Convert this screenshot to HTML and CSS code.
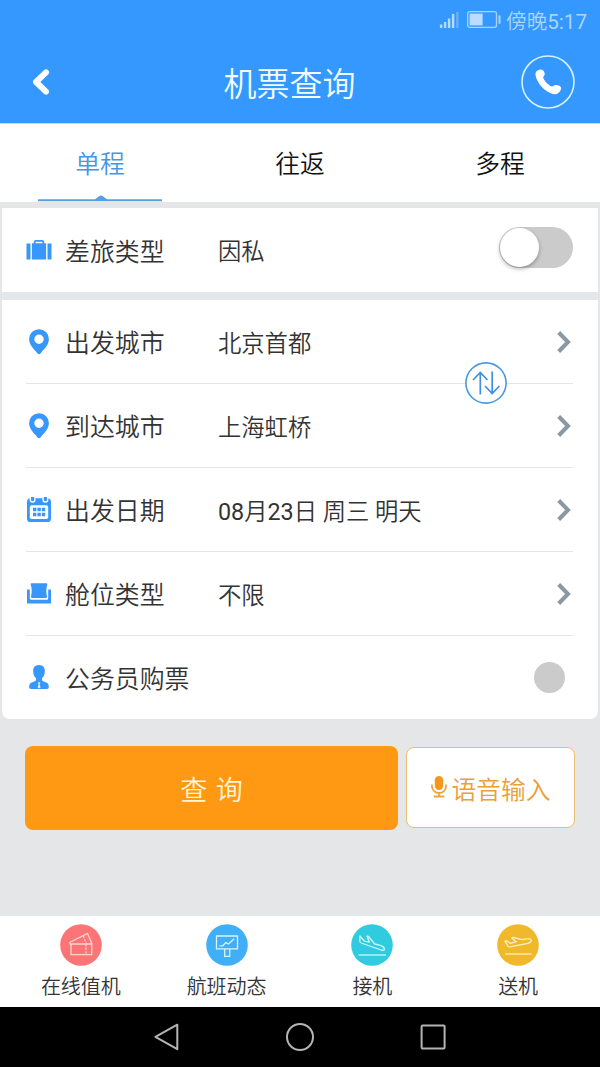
FILE: index.html
```html
<!DOCTYPE html>
<html lang="zh-CN">
<head>
<meta charset="utf-8">
<title>机票查询</title>
<link rel="stylesheet" href="styles.css">
</head>
<body>
<div class="screen">
  <header class="header">
    <div class="status">
      <svg class="signal" width="20" height="18" viewBox="0 0 20 18"><path d="M2.1 13.5v3.5M6.1 11v6M10.1 7.5v9.5M14.1 3v14" stroke="#b5dcff" stroke-width="2.4"/><path d="M18.3 1v16" stroke="#66b0fb" stroke-width="2.4"/></svg>
      <svg class="battery" width="34" height="17" viewBox="0 0 34 17"><rect x=".7" y=".7" width="28.8" height="15.6" rx="2" fill="none" stroke="#a9d4ff" stroke-width="1.3"/><rect x="2.6" y="2.6" width="13" height="11.8" fill="#b9dcff"/><rect x="31.5" y="4.2" width="2" height="8.6" rx=".6" fill="#a9d4ff"/></svg>
      <span class="clock">傍晚<span class="digits">5:17</span></span>
    </div>
    <div class="titlebar">
      <svg class="back" width="20" height="28" viewBox="0 0 20 28"><path d="M16 4.4 6 14l10 9.6" fill="none" stroke="#fff" stroke-width="6" stroke-linecap="round" stroke-linejoin="round"/></svg>
      <h1 class="title">机票查询</h1>
      <svg class="phone" width="54" height="54" viewBox="0 0 54 54"><circle cx="27" cy="27" r="26" fill="none" stroke="#d6f4ff" stroke-width="1.6"/><path d="M16.6 15.6C20.2 13.1 22.8 14.8 23.7 18.3C24.1 20.6 22.3 21.1 22.2 22.7C22.9 25.4 27.5 30.3 30.8 31.5C32.6 31.6 33 29.9 35.2 30.1C38.4 30.4 41 32 39.9 34.4C38.9 37 36.5 39.6 33 39.2C24.7 37.6 15.8 28.5 14.5 20C14.3 18 15 16.6 16.6 15.6Z" fill="#fff"/></svg>
    </div>
  </header>

  <nav class="tabs">
    <div class="tab tab-active">单程<svg class="tab-line" width="124" height="7" viewBox="0 0 124 7"><path d="M0 4.2H57L61.5 1Q63 0 64.5 1L69 4.2H124V6.2H0Z" fill="#5a9ee2"/></svg></div>
    <div class="tab">往返</div>
    <div class="tab">多程</div>
  </nav>

  <main class="content">
    <section class="card card-type">
      <div class="row">
        <svg class="icon" width="26" height="26" viewBox="0 0 26 26"><path d="M.5 6.4h4v16.2h-4zM21.5 6.4h4v16.2h-4z" fill="#3797fb"/><path d="M5.9 6.2h1.9V4.8Q7.8 2.9 9.7 2.9h6.6Q18.2 2.9 18.2 4.8V6.2h1.9v16.4H5.9zM9.6 4.8V6.2h6.8V4.8z" fill="#3797fb" fill-rule="evenodd"/></svg>
        <span class="label">差旅类型</span>
        <span class="value">因私</span>
        <span class="toggle"><span class="knob"></span></span>
      </div>
    </section>

    <section class="card card-form">
      <div class="row">
        <svg class="icon" width="26" height="26" viewBox="0 0 26 26"><path d="M13 .2A9.9 9.9 0 0 0 3.1 10.1C3.1 16.4 8.8 21.1 11.5 24.5Q13 26 14.5 24.5C17.2 21.1 22.9 16.4 22.9 10.1A9.9 9.9 0 0 0 13 .2ZM13 5.5a4.7 4.7 0 1 1 0 9.4a4.7 4.7 0 0 1 0-9.4Z" fill="#3797fb" fill-rule="evenodd"/></svg>
        <span class="label">出发城市</span>
        <span class="value">北京首都</span>
        <svg class="chevron" width="16" height="24" viewBox="0 0 16 24"><path d="M2.7 2.5 12 12l-9.3 9.5" fill="none" stroke="#8998a3" stroke-width="4"/></svg>
        <svg class="swap" width="42" height="42" viewBox="0 0 42 42"><circle cx="21" cy="21" r="20.1" fill="#fff" stroke="#4b98e2" stroke-width="1.6"/><path d="M15.3 32.5V10.8M8 18l7.3-7.5 7.2 7.5M27.2 9.5v21.7M20 24l7.2 7.5 7.2-7.5" fill="none" stroke="#3d90e4" stroke-width="1.7"/></svg>
      </div>
      <div class="row">
        <svg class="icon" width="26" height="26" viewBox="0 0 26 26"><path d="M13 .2A9.9 9.9 0 0 0 3.1 10.1C3.1 16.4 8.8 21.1 11.5 24.5Q13 26 14.5 24.5C17.2 21.1 22.9 16.4 22.9 10.1A9.9 9.9 0 0 0 13 .2ZM13 5.5a4.7 4.7 0 1 1 0 9.4a4.7 4.7 0 0 1 0-9.4Z" fill="#3797fb" fill-rule="evenodd"/></svg>
        <span class="label">到达城市</span>
        <span class="value">上海虹桥</span>
        <svg class="chevron" width="16" height="24" viewBox="0 0 16 24"><path d="M2.7 2.5 12 12l-9.3 9.5" fill="none" stroke="#8998a3" stroke-width="4"/></svg>
      </div>
      <div class="row">
        <svg class="icon" width="26" height="26" viewBox="0 0 26 26"><rect x="1" y="1.2" width="24" height="23.8" rx="3.6" fill="#3797fb"/><rect x="3.8" y="8.3" width="18.4" height="13.8" rx="1.8" fill="#fff"/><path d="M4.3 0v2.7a2.3 2.3 0 0 0 4.6 0V0M17.1 0v2.7a2.3 2.3 0 0 0 4.6 0V0" fill="#3797fb" stroke="#fff" stroke-width="1.3"/><path d="M7 10.8h3.4v3.4h-3.4zM11.4 10.8h3.4v3.4h-3.4zM15.8 10.8h3.4v3.4h-3.4zM7 15.8h3.4v3.4h-3.4zM11.4 15.8h3.4v3.4h-3.4zM15.8 15.8h3.4v3.4h-3.4z" fill="#3797fb"/></svg>
        <span class="label">出发日期</span>
        <span class="value"><span class="digits">08</span>月<span class="digits">23</span>日 周三 明天</span>
        <svg class="chevron" width="16" height="24" viewBox="0 0 16 24"><path d="M2.7 2.5 12 12l-9.3 9.5" fill="none" stroke="#8998a3" stroke-width="4"/></svg>
      </div>
      <div class="row">
        <svg class="icon" width="26" height="26" viewBox="0 0 26 26"><path d="M5.6 2.2H20.4Q21.7 2.2 21.3 3.5C20 7.5 20 11.5 21 15.4Q21.2 17 19.6 17H6.4Q4.8 17 5 15.4C6 11.5 6 7.5 4.7 3.5Q4.3 2.2 5.6 2.2Z" fill="#3797fb"/><path d="M1 8.5h2.8v8.8q0 1.5 1.5 1.5h15.4q1.5 0 1.5-1.5V8.5H25v14H1z" fill="#3797fb"/></svg>
        <span class="label">舱位类型</span>
        <span class="value">不限</span>
        <svg class="chevron" width="16" height="24" viewBox="0 0 16 24"><path d="M2.7 2.5 12 12l-9.3 9.5" fill="none" stroke="#8998a3" stroke-width="4"/></svg>
      </div>
      <div class="row row-official">
        <svg class="icon" width="26" height="26" viewBox="0 0 26 26"><path d="M13 1C9 1 6.9 3.8 7.2 7.3C7.2 10.8 8.4 12.7 10 14.2V16.3C8 18.3 3.2 18 3.2 22.3V23.2Q3.2 25 5 25H21Q22.8 25 22.8 23.2V22.3C22.8 18 18 18.3 16 16.3V14.2C17.6 12.7 18.8 10.8 18.8 7.3C19.1 3.8 17 1 13 1Z" fill="#3797fb"/><path d="M12 18.2h2.3l-.6 2 .8 3.4-1.4 1-1.4-1 .8-3.4z" fill="#dceeff"/></svg>
        <span class="label">公务员购票</span>
        <span class="radio"></span>
      </div>
    </section>

    <div class="actions">
      <button class="btn-search">查 询</button>
      <button class="btn-voice"><svg width="18" height="24" viewBox="0 0 18 24"><rect x="4.8" y="1" width="8.4" height="14" rx="4.2" fill="#f6971d"/><path d="M2 10.2v1.2a7 6.6 0 0 0 14 0v-1.2M9 18v3.2M4.5 21.5h9" fill="none" stroke="#e8a73d" stroke-width="1.8" stroke-linecap="round"/></svg><span>语音输入</span></button>
    </div>
  </main>

  <footer class="shortcuts">
    <div class="shortcut">
      <svg width="42" height="42" viewBox="0 0 42 42"><circle cx="21" cy="21" r="20.8" fill="#fb7476"/><g fill="none" stroke="#ffd5d2" stroke-width="1.3"><path d="M11 20h20.8v10.7H11ZM9.5 18.5 27.5 9.3l4.3 10.2M9.5 18.5 11 21.5"/><path d="M26 20v10.7M23.2 11.8l3 7.5" stroke-dasharray="2.4 1.2"/></g></svg>
      <span>在线值机</span>
    </div>
    <div class="shortcut">
      <svg width="42" height="42" viewBox="0 0 42 42"><circle cx="21" cy="21" r="20.8" fill="#40aff8"/><g fill="none" stroke="#d7f3ff" stroke-width="1.3"><path d="M10.5 12h21v12.8h-21zM18.7 24.8h5v7.5h-5zM13.5 21.8h3.3l3-3.2 2.7 1.4 5.6-5.2"/></g></svg>
      <span>航班动态</span>
    </div>
    <div class="shortcut">
      <svg width="42" height="42" viewBox="0 0 42 42"><circle cx="21" cy="21" r="20.8" fill="#31cbe0"/><g fill="none" stroke="#cafaff" stroke-width="1.3" stroke-linejoin="round"><path d="M9 12 8.8 17Q9 18.4 10.2 19L30.2 26Q34 27 33.5 24.7Q32.5 22.2 28.5 21.2L23.7 20 17.5 12.5 16 12.2 18.4 18.2 13.4 17.2Z"/><path d="M7.5 31H35"/></g></svg>
      <span>接机</span>
    </div>
    <div class="shortcut">
      <svg width="42" height="42" viewBox="0 0 42 42"><circle cx="21" cy="21" r="20.8" fill="#f0b82b"/><g fill="none" stroke="#fff0c4" stroke-width="1.3" stroke-linejoin="round"><path d="M8 17.2 11 22.2Q12 23 14 22.7L30.8 19.4Q35 18 34 15.6Q32.5 14 29 15L25 15.7 16 13.3 14.7 14 19.4 17.7 13.5 19.4 9.8 17Z"/><path d="M8 30H34.5"/></g></svg>
      <span>送机</span>
    </div>
  </footer>

  <div class="sysnav">
    <svg width="30" height="30" viewBox="0 0 30 30"><path d="M25.3 2.7 3.4 14.8 25.3 27.2Z" fill="none" stroke="#b4b4b4" stroke-width="2" stroke-linejoin="round"/></svg>
    <svg width="30" height="30" viewBox="0 0 30 30"><circle cx="15" cy="15" r="13" fill="none" stroke="#b4b4b4" stroke-width="2"/></svg>
    <svg width="30" height="30" viewBox="0 0 30 30"><rect x="3.6" y="3.4" width="23" height="23" rx="1" fill="none" stroke="#b4b4b4" stroke-width="2"/></svg>
  </div>
</div>
</body>
</html>
```
FILE: styles.css
```css
* { box-sizing: border-box; }
body { margin: 0; font-family: Roboto, "Noto Sans CJK SC", sans-serif; color: #333; }
svg { display: block; flex: none; }

.screen { width: 600px; height: 1067px; display: flex; flex-direction: column; background: #e5e6e8; overflow: hidden; }

.header { height: 124px; flex: none; background: #3498ff; border-bottom: 1px solid #bddfff; }
.status { height: 41px; display: flex; align-items: center; justify-content: flex-end; padding-right: 13px; color: #a9d5ff; }
.signal { margin: 0 8px 2px 0; }
.battery { margin: 0 5px 2px 0; }
.clock { padding-top: 2px; font-size: 20.6px; line-height: 40px; font-weight: 350; }
.digits { font-weight: 400; }
.titlebar { height: 82px; display: flex; align-items: center; justify-content: space-between; padding: 0 25px 0 30px; }
.title { margin: 0; padding: 5px 0 0 8px; font-size: 33px; line-height: 44px; font-weight: 350; color: #f2fbff; }

.tabs { height: 78px; flex: none; display: flex; background: #fff; }
.tab { flex: 1; position: relative; padding-top: 4px; text-align: center; font-size: 24.8px; line-height: 74px; color: #111; font-weight: 350; }
.tab-active { color: #4397e6; }
.tab-line { position: absolute; left: 38px; bottom: 0; }

.content { flex: 1; padding: 6px 2px 0; }
.card { background: #fff; padding: 0 25px 0 24px; }
.card-type { height: 84px; }
.card-form { height: 419px; margin-top: 8px; border-radius: 0 0 8px 8px; }
.row { position: relative; height: 84px; display: flex; align-items: center; border-bottom: 1px solid #e4e4e4; }
.row:last-child { border-bottom: 0; }
.row-official { height: 82px; }
.label { margin-left: 13px; padding-top: 5px; width: 153px; font-size: 24.9px; line-height: 36px; font-weight: 350; white-space: nowrap; }
.value { flex: 1; padding-top: 4px; font-size: 23.3px; line-height: 36px; font-weight: 350; white-space: nowrap; }
.chevron { margin-right: 1px; }
.swap { position: absolute; right: 66px; bottom: -21px; z-index: 1; }
.toggle { width: 74px; height: 41px; border-radius: 21px; background: #cbcbcb; margin-bottom: 5px; }
.knob { display: block; width: 39px; height: 39px; margin: 1px; border-radius: 50%; background: #fff; box-shadow: 0 2px 4px rgba(0,0,0,.3); }
.radio { width: 31px; height: 31px; margin: 0 8px 0 auto; border-radius: 50%; background: #cbcbcb; }

.actions { display: flex; align-items: flex-start; gap: 8px; padding: 27px 23px 0; }
button { font-family: inherit; padding: 0; border: 0; }
.btn-search { width: 373px; height: 84px; border-radius: 8px; background: #ff9913; color: #fff5dc; font-size: 27px; font-weight: 350; word-spacing: 2px; }
.btn-voice { width: 169px; height: 81px; margin-top: 1px; border: 1px solid #eabd74; border-radius: 8px; background: #fff; color: #e9a037; font-size: 24.8px; font-weight: 350; display: flex; align-items: center; justify-content: center; gap: 3px; }
.btn-voice svg { margin-bottom: 2px; }
.btn-voice span { padding-top: 1px; }

.shortcuts { height: 91px; flex: none; display: flex; padding: 8px 9px 0 8px; background: #fff; }
.shortcut { flex: 1; display: flex; flex-direction: column; align-items: center; font-size: 20px; line-height: 28px; font-weight: 350; gap: 7px; }

.sysnav { height: 60px; flex: none; display: flex; align-items: center; justify-content: center; gap: 103px; background: #000; }
```
